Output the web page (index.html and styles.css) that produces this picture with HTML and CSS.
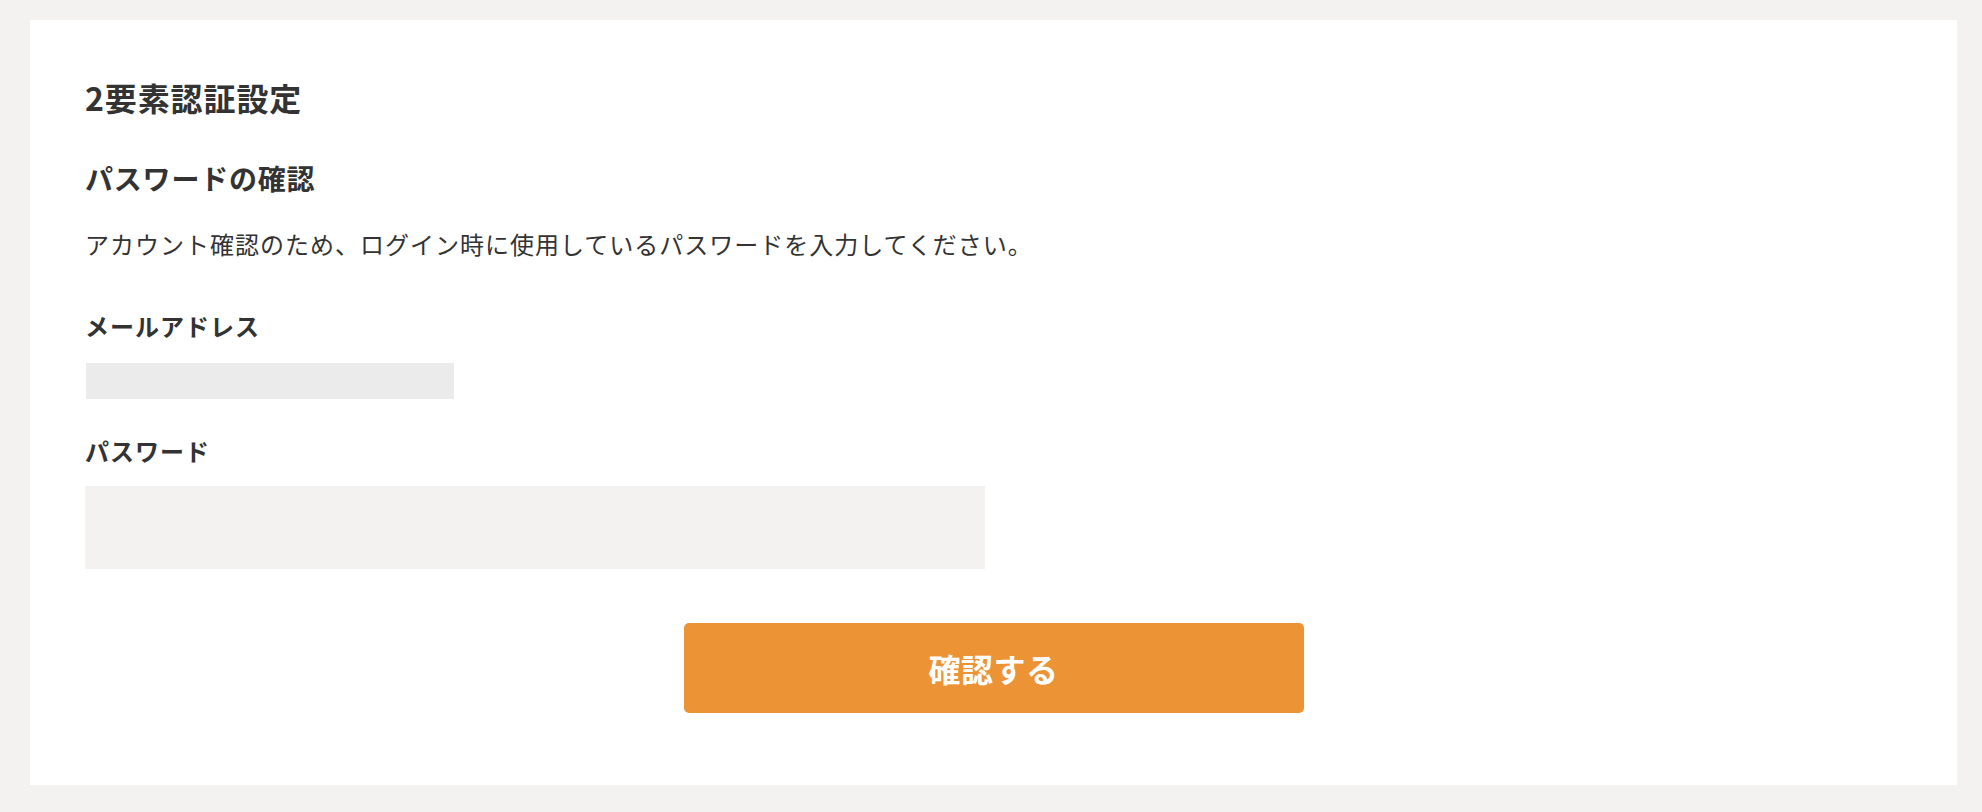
FILE: index.html
```html
<!DOCTYPE html>
<html lang="ja">
<head>
<meta charset="utf-8">
<title>2要素認証設定</title>
<link rel="stylesheet" href="styles.css">
</head>
<body>
<main class="card">
  <h1 class="title">2要素認証設定</h1>
  <h2 class="subtitle">パスワードの確認</h2>
  <p class="desc">アカウント確認のため、ログイン時に使用しているパスワードを入力してください。</p>
  <form class="form">
    <div class="field">
      <div class="label">メールアドレス</div>
      <div class="email-mask"></div>
    </div>
    <div class="field field-pass">
      <label class="label" for="pw">パスワード</label>
      <input class="input" id="pw" type="password">
    </div>
    <div class="actions">
      <button class="btn" type="button">確認する</button>
    </div>
  </form>
</main>
</body>
</html>
```
FILE: styles.css
```css
html, body {
  margin: 0;
  padding: 0;
}
body {
  background: #f3f2f0;
  font-family: "Noto Sans CJK JP", "Noto Sans", sans-serif;
  color: #333333;
  padding: 20px 25px 28px 30px;
}
.card {
  background: #ffffff;
  padding: 53px 55px 72px 55px;
  box-sizing: border-box;
}
.title {
  margin: 0;
  font-size: 32px;
  line-height: 48px;
  font-weight: 700;
  letter-spacing: 0.9px;
}
.subtitle {
  margin: 36px 0 0;
  font-size: 28px;
  line-height: 42px;
  font-weight: 700;
  letter-spacing: 0.8px;
}
.desc {
  margin: 27px 0 0;
  font-size: 24px;
  line-height: 36px;
  letter-spacing: 1px;
  font-weight: 400;
}
.form {
  margin: 0;
  display: flex;
  flex-direction: column;
}
.field {
  display: flex;
  flex-direction: column;
  align-items: flex-start;
  margin-top: 46px;
}
.field-pass {
  margin-top: 34px;
}
.label {
  display: block;
  font-size: 24px;
  line-height: 36px;
  font-weight: 700;
  letter-spacing: 1px;
}
.email-mask {
  margin: 19px 0 0 1px;
  width: 368px;
  height: 36px;
  background: #ebebeb;
}
.input {
  margin-top: 17px;
  width: 900px;
  height: 83px;
  box-sizing: border-box;
  border: none;
  background: #f3f2f0;
  font-size: 24px;
  padding: 0 16px;
  outline: none;
}
.actions {
  display: flex;
  justify-content: center;
  margin-top: 54px;
}
.btn {
  width: 620px;
  height: 90px;
  border: none;
  border-radius: 5px;
  background: #ec9335;
  color: #ffffff;
  font-family: "Noto Sans CJK JP", "Noto Sans", sans-serif;
  font-size: 32px;
  font-weight: 700;
  letter-spacing: 0.5px;
  cursor: pointer;
}
```
